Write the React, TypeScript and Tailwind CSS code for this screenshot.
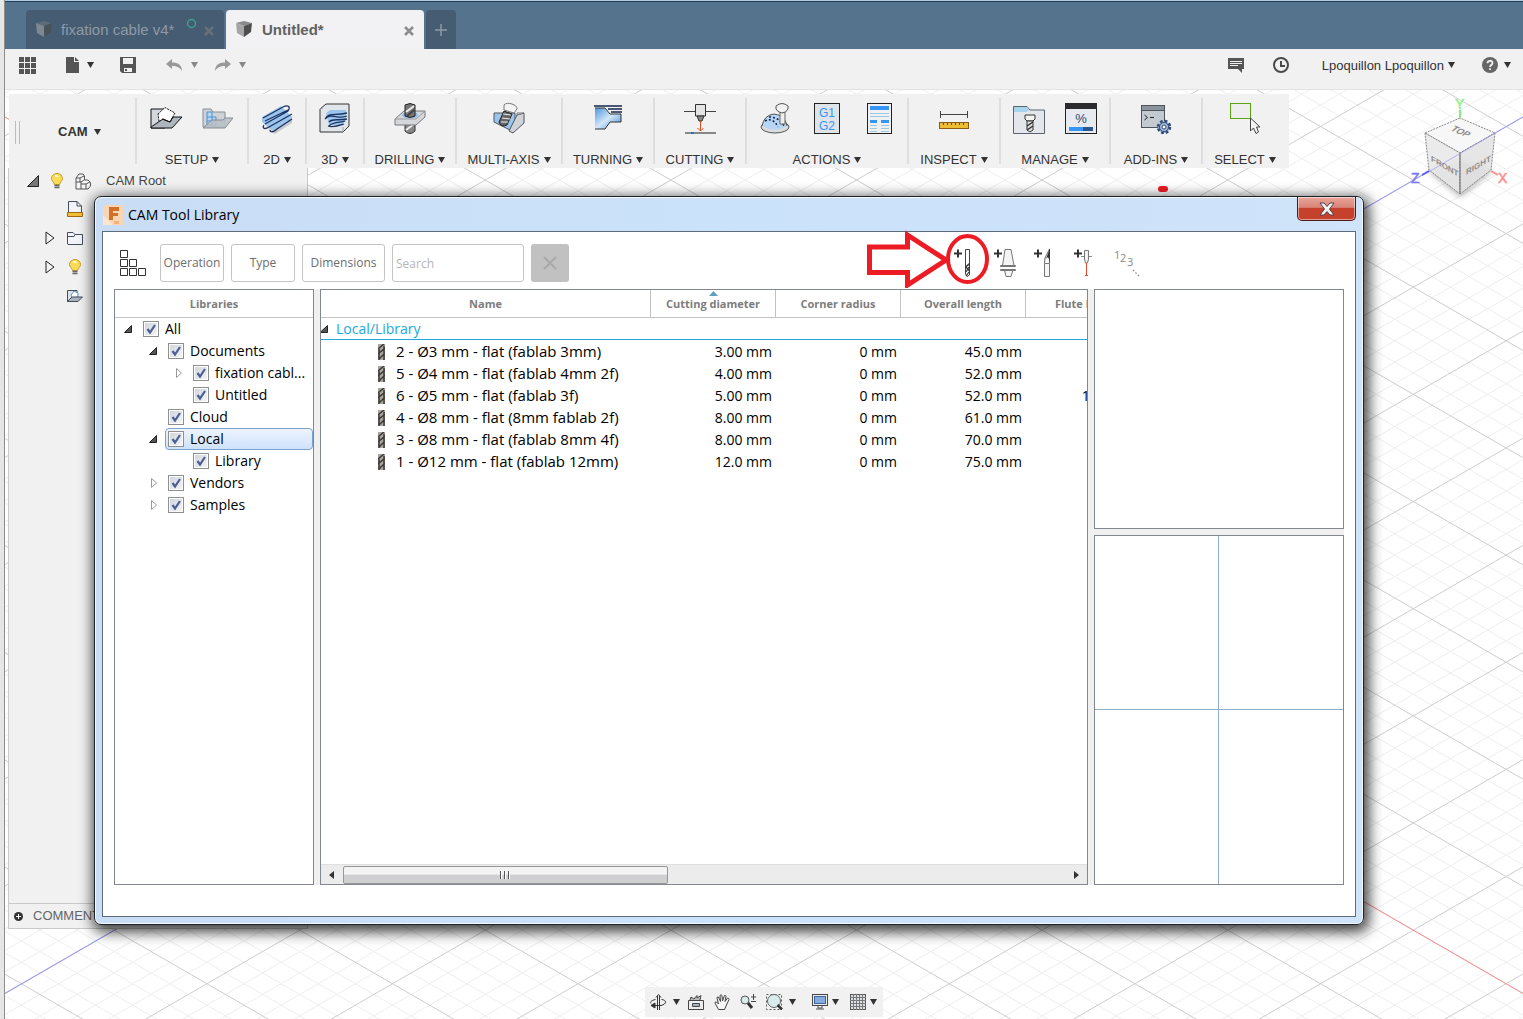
import type { ReactNode } from "react";
import clsx from "clsx";

function Caret({ className = "text-[#333]" }: { className?: string }) {
  return (
    <svg width="7" height="6" viewBox="0 0 7 6" className={clsx("shrink-0", className)} aria-hidden="true">
      <path d="M0 0H7L3.5 6Z" fill="currentColor" />
    </svg>
  );
}

/* ---------- ribbon icons, all on a 32 x 32 box ---------- */

function Icon32({ children }: { children: ReactNode }) {
  return (
    <svg width="32" height="32" viewBox="0 0 32 32" fill="none" className="shrink-0" aria-hidden="true">
      {children}
    </svg>
  );
}

const SetupIcon = () => (
  <Icon32>
    <path d="M1 7H15V26H1Z" fill="#d4d8dc" stroke="#111" />
    <path d="M8 12L15 5.500L25 11L20 20L9 19Z" fill="#fff" stroke="#111" strokeDasharray="2 1" />
    <path d="M1 25L13 17L20 20L23 15L32 15L22 26L1 26Z" fill="#aeb6bd" stroke="#111" />
    <path d="M12 17L20 20L23 15" stroke="#111" />
  </Icon32>
);

const SetupFolderIcon = () => (
  <Icon32>
    <path d="M1 7H9L11 10H23V25H1Z" fill="#cfd3d8" stroke="#878d94" />
    <path d="M5 10H10V15H14V23H5Z" fill="#b6d6f2" stroke="#4a90cc" />
    <path d="M5 15H10V24M5 19H14" stroke="#4a90cc" />
    <path d="M1 26L10 18H21L23 16H31L23 26Z" fill="#b9c0c7" fillOpacity=".85" stroke="#878d94" />
  </Icon32>
);

const Mill2DIcon = () => (
  <Icon32>
    <path d="M1 15L20 4L31 15V20L14 31L1 20Z" fill="#9cc5ee" />
    <path d="M14 28L31 16V21L14 32L6 26Z" fill="#c6cace" />
    <path
      d="M2 16L22 5C26 3 29 4 28 7L27 9L4 22M31 12L8 25C3 28 1 26 3 23M9 28C9 31 13 30 16 27L31 17M4 19L27 8"
      stroke="#1b3361"
      strokeWidth="1.300"
    />
  </Icon32>
);

const Mill3DIcon = () => (
  <Icon32>
    <path d="M1 7L7 2H30V24L24 30H1Z" fill="#e3e6e9" stroke="#333" />
    <path d="M7 11L11 8H27V19L22 23H10Z" fill="#9cc5ee" />
    <path d="M24 30V25M1 7L4 6" stroke="#9aa0a6" />
    <path
      d="M6 17C10 10 15 14 28 11M6 17C13 10 18 18 28 14M10 20C14 16 18 19 28 17M10 24C15 19 22 21 26 19M9 24C14 26 19 24 25 22"
      stroke="#1b3361"
      strokeWidth="1.300"
    />
  </Icon32>
);

const DrillIcon = () => (
  <Icon32>
    <path d="M11 22H21V29Q16 34 11 29Z" fill="#888" stroke="#333" />
    <path d="M12 28L20 22" stroke="#eee" strokeWidth="2" />
    <path d="M1 17L10 9H31V15L22 23H1Z" fill="#d4d8dc" stroke="#777" />
    <path d="M1 17H22L31 9" stroke="#999" />
    <ellipse cx="16" cy="13" rx="8" ry="3.500" fill="#8ebcec" />
    <path d="M11 3Q16 0 21 3V14Q16 17 11 14Z" fill="#777" stroke="#222" />
    <path d="M12 10L20 4" stroke="#eee" strokeWidth="2" />
    <path d="M13 14L20 8" stroke="#444" strokeWidth="2" />
  </Icon32>
);

const MultiAxisIcon = () => (
  <Icon32>
    <path d="M1 11H22V20L17 28L1 20Z" fill="#9cc5ee" stroke="#555" />
    <path d="M31 11L24 13L16 29L20 31L31 21Z" fill="#d0d4d8" stroke="#555" />
    <path d="M24 13L31 11H24Z" fill="#f2f2f2" stroke="#777" />
    <path d="M11 9L19 12L14 23Q8 26 6 20Z" fill="#666" stroke="#222" />
    <path d="M9 16L17 17M8 20L15 20M10 12L18 13" stroke="#eee" />
    <path d="M11 3C14 -1 25 3 24 7L21 11L11 8Z" fill="#f4f4f4" stroke="#777" />
  </Icon32>
);

const TurningIcon = () => (
  <Icon32>
    <defs>
      <linearGradient id="turn" x1="0" y1="0" x2="1" y2="1">
        <stop offset="0" stopColor="#4b96dd" />
        <stop offset=".5" stopColor="#d3e7f9" />
        <stop offset="1" stopColor="#3f8cd6" />
      </linearGradient>
    </defs>
    <path d="M3 6H13L18 12H29V20H18L13 27H3Z" fill="url(#turn)" />
    <path d="M3 6H13L18 12H29V20H18L13 27H3" stroke="#333" />
    <path d="M2 4H30M16 7H30M19 10H30" stroke="#15254d" strokeWidth="1.500" />
  </Icon32>
);

const CuttingIcon = () => (
  <Icon32>
    <path d="M0 9.500H32" stroke="#444" />
    <path d="M11.500 2.500H21.500V14H11.500Z" fill="#e4e4e4" stroke="#333" />
    <path d="M13 14H20L18 19H15Z" fill="#888" stroke="#333" />
    <path d="M16.500 19V29" stroke="#e2481f" />
    <path d="M13.500 26L16.500 29L19.500 26" stroke="#e2481f" />
    <path d="M1 31H32" stroke="#888" strokeWidth="2" />
    <path d="M7 31H10" stroke="#1c77c4" strokeWidth="2" />
  </Icon32>
);

const SimulateIcon = () => (
  <Icon32>
    <ellipse cx="16" cy="25" rx="14" ry="6" fill="#d9dcdf" stroke="#555" />
    <path d="M3 24Q5 13 15 12Q26 13 28 24Q16 31 3 24Z" fill="#b6d6f4" />
    <path d="M3 24Q5 13 15 12Q26 13 28 24" stroke="#555" />
    <path d="M6 19Q14 15 19 25M10 15Q20 15 25 24" stroke="#15254d" strokeWidth="1.500" strokeDasharray="2 2" />
    <path d="M21 9H26V22H21Z" fill="#eee" stroke="#666" />
    <path d="M17 4Q23 -1 29 4V7Q27 11 23 11Q18 10 17 7Z" fill="#f1f1f1" stroke="#555" />
  </Icon32>
);

const PostIcon = () => (
  <Icon32>
    <rect x="3.500" y="1.500" width="25" height="30" fill="#dfe4e9" stroke="#222" />
    <text x="16" y="15" textAnchor="middle" fontSize="12" fill="#3694f5" fontFamily="Liberation Sans, sans-serif">
      G1
    </text>
    <text x="16" y="28" textAnchor="middle" fontSize="12" fill="#3694f5" fontFamily="Liberation Sans, sans-serif">
      G2
    </text>
  </Icon32>
);

const SheetIcon = () => (
  <Icon32>
    <rect x="4.500" y="1.500" width="24" height="30" fill="#eef0f2" stroke="#222" />
    <path d="M7 6H26" stroke="#3694f5" strokeWidth="4" />
    <path d="M7 11.500H26M7 14.500H26M7 23.500H14M18 23.500H26M7 26.500H14M18 26.500H26M7 29.500H14M18 29.500H26" stroke="#9cc9df" />
    <path d="M7 19.500H14M18 19.500H26" stroke="#3694f5" strokeWidth="3" />
  </Icon32>
);

const MeasureIcon = () => (
  <Icon32>
    <path d="M2 12.500H30M2.500 9V16M29.500 9V16" stroke="#444" />
    <rect x="1.500" y="20.500" width="29" height="6" fill="#edbd35" stroke="#8b5a13" />
    <path d="M5.500 21V23M9.500 21V23M13.500 21V23M17.500 21V23M21.500 21V23M25.500 21V23" stroke="#6b4510" />
  </Icon32>
);

const ToolLibraryIcon = () => (
  <Icon32>
    <path d="M.5 8V4.500H14L17 8H31.500V31.500H.5Z" fill="#e3e7ec" stroke="#5b646e" />
    <path d="M1 5H14L16 8L14 10H1Z" fill="#a8d4ee" />
    <path d="M12 13H22V17L20 19H14L12 17Z" fill="#f4f4f4" stroke="#333" />
    <path d="M14 19H20V28L17 30L14 28Z" fill="#ddd" stroke="#333" />
    <path d="M14 24L20 20M14 28L20 24" stroke="#333" strokeWidth="1.500" />
  </Icon32>
);

const TaskManagerIcon = () => (
  <Icon32>
    <rect x=".5" y="1.500" width="31" height="30" fill="#e7ebef" stroke="#222" />
    <rect x="0" y="1" width="32" height="6" fill="#2b2b2d" />
    <text x="16" y="21" textAnchor="middle" fontSize="13" fill="#2a4a73" fontFamily="Liberation Sans, sans-serif">
      %
    </text>
    <path d="M4 27H18" stroke="#3694f5" strokeWidth="4" />
    <path d="M18 27H28" stroke="#27588f" strokeWidth="4" />
  </Icon32>
);

const AddInsIcon = () => (
  <Icon32>
    <rect x="1.500" y="3.500" width="23" height="22" fill="#c3cad1" stroke="#4c535b" />
    <path d="M2 6H24" stroke="#8b949c" strokeWidth="4" />
    <path d="M2 8.500H24" stroke="#4c535b" />
    <path d="M4.500 13L7.500 15.500L4.500 18M10 15.500H14" stroke="#222" />
    <circle cx="24" cy="25" r="6" fill="#a7bedd" stroke="#2e4876" strokeWidth="2.500" strokeDasharray="2.700 2" />
    <circle cx="24" cy="25" r="4.500" fill="#a7bedd" stroke="#2e4876" />
    <circle cx="24" cy="25" r="2" fill="#fff" stroke="#2e4876" />
  </Icon32>
);

const SelectIcon = () => (
  <Icon32>
    <rect x="1.500" y="1.500" width="20" height="15" fill="#eee" stroke="#57a515" />
    <path d="M21.500 16V29L24.500 26L27 31.500L29.500 30L27.500 25H31Z" fill="#f4f4f4" stroke="#444" />
  </Icon32>
);

const ribbon: { label: string; width: string; icons: (() => ReactNode)[] }[] = [
  { label: "SETUP", width: "w-[112px]", icons: [SetupIcon, SetupFolderIcon] },
  { label: "2D", width: "w-[58px]", icons: [Mill2DIcon] },
  { label: "3D", width: "w-[58px]", icons: [Mill3DIcon] },
  { label: "DRILLING", width: "w-[92px]", icons: [DrillIcon] },
  { label: "MULTI-AXIS", width: "w-[106px]", icons: [MultiAxisIcon] },
  { label: "TURNING", width: "w-[92px]", icons: [TurningIcon] },
  { label: "CUTTING", width: "w-[92px]", icons: [CuttingIcon] },
  { label: "ACTIONS", width: "w-[162px]", icons: [SimulateIcon, PostIcon, SheetIcon] },
  { label: "INSPECT", width: "w-[92px]", icons: [MeasureIcon] },
  { label: "MANAGE", width: "w-[110px]", icons: [ToolLibraryIcon, TaskManagerIcon] },
  { label: "ADD-INS", width: "w-[92px]", icons: [AddInsIcon] },
  { label: "SELECT", width: "w-[86px]", icons: [SelectIcon] },
];

/* ---------- title bar ---------- */

function CubeIcon({ dim }: { dim?: boolean }) {
  return (
    <svg width="16" height="16" viewBox="0 0 16 16" className={clsx("mb-1 shrink-0", dim && "opacity-60")} aria-hidden="true">
      <path d="M0 2L8 0L16 2L8 5Z" fill={dim ? "#6c7780" : "#8a8a8a"} />
      <path d="M0 2L8 5V16L1 12Z" fill="#a6a6a6" />
      <path d="M16 2L8 5V16L15 11Z" fill="#4d4d4d" />
    </svg>
  );
}

function CloseGlyph() {
  return (
    <svg width="10" height="10" viewBox="0 0 10 10" aria-hidden="true">
      <path d="M1 1L9 9M9 1L1 9" stroke="currentColor" strokeWidth="2.500" />
    </svg>
  );
}

function TitleBar() {
  return (
    <header className="flex h-[49px] items-end gap-0.5 border-t border-[#b4cade] bg-[#56738d] pl-[21px] shadow-[inset_0_1px_#1e3f5c]">
      <div className="flex h-[39px] w-[198px] items-center rounded-t bg-[#455c72] pt-0.5 pr-2.5 pl-2.5 text-[15px] text-[#8e9aa5]">
        <CubeIcon dim />
        <span className="ml-[9px]">fixation cable v4*</span>
        <svg width="11" height="11" viewBox="0 0 11 11" className="mb-3.5 ml-3" aria-hidden="true">
          <circle cx="5.500" cy="5.500" r="4" fill="none" stroke="#3aa08f" strokeWidth="1.500" />
        </svg>
        <button type="button" aria-label="Close fixation cable" className="ml-auto text-[#66717b]">
          <CloseGlyph />
        </button>
      </div>
      <div className="flex h-[39px] w-[198px] items-center rounded-t bg-[#f2f2f5] px-2.5 pt-0.5 text-[15px] font-bold text-[#626262]">
        <CubeIcon />
        <span className="ml-2.5">Untitled*</span>
        <button type="button" aria-label="Close Untitled" className="ml-auto text-[#8c8c8c]">
          <CloseGlyph />
        </button>
      </div>
      <button
        type="button"
        aria-label="New tab"
        className="flex h-[39px] w-[30px] items-center justify-center rounded-t bg-[#455c72] text-[#8e9aa5]"
      >
        <svg width="12" height="12" viewBox="0 0 12 12" aria-hidden="true">
          <path d="M6 0V12M0 6H12" stroke="currentColor" strokeWidth="1.500" />
        </svg>
      </button>
    </header>
  );
}

function QuickBar() {
  return (
    <div className="flex h-[41px] items-start border-b border-[#e2e2e2] bg-[#f1f1f1] pt-2 pr-3 pl-3.5 text-[13px] text-[#333] [&>button]:flex [&>button]:h-4 [&>button]:items-center">
      <button type="button" aria-label="Data panel">
        <svg width="17" height="17" viewBox="0 0 17 17" fill="#555" aria-hidden="true">
          <path d="M0 0h5v5h-5zM6 0h5v5h-5zM12 0h5v5h-5zM0 6h5v5h-5zM6 6h5v5h-5zM12 6h5v5h-5zM0 12h5v5h-5zM6 12h5v5h-5zM12 12h5v5h-5z" />
        </svg>
      </button>
      <button type="button" aria-label="File" className="ml-[30px] gap-2">
        <svg width="13" height="16" viewBox="0 0 13 16" fill="#555" aria-hidden="true">
          <path d="M0 0H8V5H13V16H0Z" />
          <path d="M9 0L13 4H9Z" />
        </svg>
        <Caret />
      </button>
      <button type="button" aria-label="Save" className="ml-[26px]">
        <svg width="16" height="16" viewBox="0 0 16 16" aria-hidden="true">
          <path d="M0 0H16V16H2L0 14Z" fill="#555" />
          <path d="M3 1H13V7H3Z" fill="#f1f1f1" />
          <path d="M4 11H12V15H4Z" fill="#f1f1f1" />
          <path d="M5 12H7V14H5Z" fill="#555" />
        </svg>
      </button>
      <button type="button" aria-label="Undo" className="ml-[30px] gap-2">
        <svg width="17" height="12" viewBox="0 0 17 12" aria-hidden="true">
          <path d="M0 5L6 0V3.500C12 3.500 16 6 16 12C14 8.500 11 7 6 7V10Z" fill="#999" />
        </svg>
        <Caret className="text-[#888]" />
      </button>
      <button type="button" aria-label="Redo" className="ml-4 gap-2">
        <svg width="17" height="12" viewBox="0 0 17 12" aria-hidden="true">
          <path d="M17 5L11 0V3.500C5 3.500 1 6 1 12C3 8.500 6 7 11 7V10Z" fill="#999" />
        </svg>
        <Caret className="text-[#888]" />
      </button>
      <button type="button" aria-label="Comments" className="ml-auto">
        <svg width="17" height="15" viewBox="0 0 17 15" aria-hidden="true">
          <path d="M0 0H16V11H14V15L10 11H0Z" fill="#555" />
          <path d="M2 3.500H14M2 5.500H14M2 7.500H10" stroke="#f1f1f1" />
        </svg>
      </button>
      <button type="button" aria-label="Job status" className="ml-7">
        <svg width="16" height="16" viewBox="0 0 16 16" fill="none" stroke="#4a4a4a" strokeWidth="2" aria-hidden="true">
          <circle cx="8" cy="8" r="7" />
          <path d="M8 4V9H12" />
        </svg>
      </button>
      <button type="button" className="ml-[33px] gap-1 whitespace-nowrap">
        <span className="pt-0.5">Lpoquillon Lpoquillon</span> <Caret />
      </button>
      <button type="button" aria-label="Help" className="ml-[27px] gap-1.5">
        <svg width="16" height="16" viewBox="0 0 16 16" aria-hidden="true">
          <circle cx="8" cy="8" r="8" fill="#666" />
          <path d="M5.500 6.200C5.500 3 10.500 3 10.500 6C10.500 8 8 8 8 10M8 11.200V13" fill="none" stroke="#f1f1f1" strokeWidth="1.800" />
        </svg>
        <Caret />
      </button>
    </div>
  );
}

function Ribbon() {
  return (
    <div className="ml-1 flex h-[74px] w-max shrink-0 bg-[#f1f1f1] text-[13px] text-[#333]">
      <div className="my-1 flex w-[128px] items-center border-r-2 border-[#dedede] pt-0.5 pl-1.5">
        <span className="h-[23px] w-[5px] border-x border-[#bdbdbd]" />
        <button type="button" className="ml-[38px] flex items-center gap-1.5 font-bold">
          CAM <Caret />
        </button>
      </div>
      {ribbon.map((g) => (
        <div
          key={g.label}
          className={clsx(
            g.width,
            "my-1 flex flex-col items-center justify-between border-r-2 border-[#dedede] pt-1 last:border-transparent",
          )}
        >
          <div className="flex gap-5">
            {g.icons.map((Icon, i) => (
              <button type="button" key={i} aria-label={`${g.label} ${i + 1}`}>
                <Icon />
              </button>
            ))}
          </div>
          <button type="button" className="flex h-2 items-center gap-1 whitespace-nowrap">
            {g.label} <Caret />
          </button>
        </div>
      ))}
    </div>
  );
}

/* ---------- browser tree ---------- */

const Bulb = () => (
  <svg width="12" height="16" viewBox="0 0 12 16" className="shrink-0" aria-hidden="true">
    <path d="M6 .5C2.500 .5 .5 3 .5 5.500C.5 8 3 9 3.500 11.500H8.500C9 9 11.500 8 11.500 5.500C11.500 3 9.500 .5 6 .5Z" fill="#fbdc57" stroke="#c39a2c" />
    <path d="M4 3Q6 2 7 4" stroke="#fff" strokeWidth="1.500" fill="none" />
    <path d="M3.500 12.500H8.500M3.500 14.500H8.500" stroke="#666" strokeWidth="1.500" />
  </svg>
);

const Closed = () => (
  <svg width="10" height="14" viewBox="0 0 10 14" className="shrink-0" aria-hidden="true">
    <path d="M1 1V13L9 7Z" fill="#f4f4f4" stroke="#222" />
  </svg>
);

function BrowserPanel() {
  return (
    <aside className="ml-[3px] flex w-[300px] flex-1 flex-col border-x border-b border-[#c9c9c9] bg-[#f1f1f1] text-[13px] text-[#444]">
      <div className="flex h-[26px] items-center pl-[18px]">
        <svg width="12" height="12" viewBox="0 0 12 12" aria-hidden="true">
          <path d="M11.500 .5V11.500H.5Z" fill="#777" stroke="#222" />
        </svg>
        <span className="ml-3">
          <Bulb />
        </span>
        <svg width="17" height="17" viewBox="0 0 17 17" fill="#f4f4f4" stroke="#555" className="ml-3" aria-hidden="true">
          <path d="M1 5L4 1H8L9.500 3V7H13L15.500 9.500V13L13 16H1Z" />
          <path d="M1 5L5 5L9 3M5 5V9M1 9H6L9 7M6 9V16M6 11H11L15 9M11 11V16" fill="none" />
        </svg>
        <span className="ml-3.5">CAM Root</span>
      </div>
      <div className="flex h-[29px] items-center pl-[58px]">
        <svg width="16" height="16" viewBox="0 0 16 16" aria-hidden="true">
          <path d="M1.500 .5H10L14.500 5V12H1.500Z" fill="#f2f4f7" stroke="#444d5c" />
          <path d="M10 .5V5H14.500" fill="none" stroke="#444d5c" />
          <path d="M.5 11.500H15.500V15.500H.5Z" fill="#f2c037" stroke="#9c6a14" />
        </svg>
      </div>
      <div className="flex h-[29px] items-center pl-9">
        <Closed />
        <svg width="16" height="14" viewBox="0 0 16 14" className="ml-3" aria-hidden="true">
          <path d="M.5 13V1.500H6L8 3.500H15.500V13.500H1Z" fill="#f2f4f7" stroke="#444d5c" />
          <path d="M1 5.500H7L8 3.500" fill="none" stroke="#444d5c" />
        </svg>
      </div>
      <div className="flex h-[29px] items-center pl-9">
        <Closed />
        <span className="ml-3.5">
          <Bulb />
        </span>
      </div>
      <div className="flex h-[29px] items-center pl-[58px]">
        <svg width="16" height="12" viewBox="0 0 16 12" aria-hidden="true">
          <path d="M.5 .5H10V11.500H.5Z" fill="#dfe3e8" stroke="#444d5c" />
          <path d="M4 5L7 1L11 3V7L5 8Z" fill="#fff" stroke="#5b93c4" />
          <path d="M.5 11.500L5 7H15.500L11 11.500Z" fill="#a9b4bf" stroke="#444d5c" />
        </svg>
      </div>
      <div className="mt-auto flex h-[25px] items-center gap-2.5 border-t border-[#c9c9c9] pl-[5px] text-[#666]">
        <svg width="9" height="9" viewBox="0 0 9 9" aria-hidden="true">
          <circle cx="4.500" cy="4.500" r="4.500" fill="#333" />
          <path d="M4.500 2V7M2 4.500H7" stroke="#fff" />
        </svg>
        COMMENTS
      </div>
    </aside>
  );
}

/* ---------- canvas ---------- */

const MAJOR = 185.6;
const MINOR = MAJOR / 5;
const SLOPE = 0.57735;
const REACH = 4000;

// both line families pass through (109.1, -17.1), one line every MINOR pixels
function isoLines(major: boolean) {
  let d = "";
  for (let k = -60; k <= 110; k++) {
    if ((k % 5 === 0) !== major) continue;
    const x = 109.1 + k * MINOR;
    d += `M${x} -17.1l${REACH} ${REACH * SLOPE}M${x} -17.1l${-REACH} ${REACH * SLOPE}`;
  }
  return d;
}

function CanvasGrid() {
  return (
    <svg className="absolute inset-0 size-full" fill="none" aria-hidden="true">
      <path d={isoLines(false)} stroke="#eeeeee" />
      <path d={isoLines(true)} stroke="#cdcdcd" />
      <path d="M0 27L1518 903.500" stroke="#ff9090" />
      <path d="M0 903.500L1518 27" stroke="#9494ff" />
    </svg>
  );
}

function ViewCube() {
  return (
    <svg
      width="120"
      height="120"
      viewBox="0 0 120 120"
      className="absolute top-0 right-0"
      fontFamily="Liberation Sans, sans-serif"
      fontWeight="bold"
      aria-label="View cube"
    >
      <defs>
        <filter id="cubeShadow" x="-30%" y="-30%" width="160%" height="160%">
          <feGaussianBlur stdDeviation="3" />
        </filter>
      </defs>
      <path d="M25 80L57 107L90 80L57 70Z" fill="#000" fillOpacity=".3" filter="url(#cubeShadow)" />
      <g fillOpacity=".9" stroke="#888" strokeDasharray="2 1">
        <path d="M57 28L22 43L57 63L92 43Z" fill="#f6f6f6" />
        <path d="M22 43L57 63V104L26 80Z" fill="#e9e9e9" />
        <path d="M92 43L57 63V104L88 80Z" fill="#e3e3e3" />
      </g>
      <path d="M57 63V104" stroke="#777" />
      <path d="M24 83L92 43" stroke="#9494ff" strokeOpacity=".6" />
      <g fill="#8d8d8d">
        <text transform="translate(47 40) rotate(24) skewX(-25)" fontSize="9">TOP</text>
        <text transform="translate(28 71) skewY(30)" fontSize="8">FRONT</text>
        <text transform="translate(63 85) skewY(-30)" fontSize="8">RIGHT</text>
      </g>
      <path d="M57 20V28" stroke="#7df07d" strokeWidth="2" />
      <path d="M19 85L26 81" stroke="#5b5bff" strokeWidth="2" />
      <path d="M88 81L95 85" stroke="#ff8d8d" strokeWidth="2" />
      <g fontSize="14" fontWeight="normal" strokeWidth=".5">
        <text x="52" y="19" fill="#90f090" stroke="#90f090">Y</text>
        <text x="8" y="93" fill="#7878f8" stroke="#7878f8">Z</text>
        <text x="95" y="93" fill="#ff8d8d" stroke="#ff8d8d">X</text>
      </g>
    </svg>
  );
}

function NavBar() {
  return (
    <nav className="relative mx-auto mt-[58px] mb-0.5 flex h-[30px] w-max items-center bg-[#f1f1f1] pr-1.5 pl-[5px] [&>button]:flex [&>button]:items-center">
      <button type="button" aria-label="Orbit" className="gap-1.5">
        <svg width="17" height="16" viewBox="0 0 17 16" fill="none" stroke="#333" aria-hidden="true">
          <path d="M7.500 16V2M9.500 16V2M6 3.500L8.500 .5L11 3.500" />
          <path d="M11.500 5.500C17 6 17 10 11 11.500H3M5.500 5.500C1 6.500 0 8 1 9.500" />
          <path d="M5 9L1 11.500L5 14Z" fill="#333" />
        </svg>
        <Caret />
      </button>
      <button type="button" aria-label="Look at" className="ml-2">
        <svg width="16" height="16" viewBox="0 0 16 16" fill="none" stroke="#444" aria-hidden="true">
          <path d="M.5 6.500H15.500V15.500H.5Z" fill="#eee" />
          <path d="M2 6L3 3L6 5L9 1.500V4L13 1.500L12 6" fill="#bbb" />
          <path d="M4.500 9.500H11.500V12.500H4.500Z" fill="#a8b3bd" />
        </svg>
      </button>
      <button type="button" aria-label="Pan" className="ml-2.5">
        <svg width="16" height="16" viewBox="0 0 16 16" aria-hidden="true">
          <path
            d="M4.500 15.500L1 9Q1 7.500 2.500 8L4.500 10L3 4Q3 2.500 4.500 3L6.500 7.500L6 1.500Q7 0 8 1.500L8.500 7L10.500 1.500Q12 1 12 2.500L11 7.500L13.500 4Q15 4 15 5.500L12.500 11L10.500 15.500Z"
            fill="#f7f7f7"
            stroke="#444"
          />
        </svg>
      </button>
      <button type="button" aria-label="Zoom" className="ml-2.5">
        <svg width="16" height="16" viewBox="0 0 16 16" aria-hidden="true">
          <circle cx="5" cy="6" r="4" fill="#d9ecec" stroke="#555" />
          <path d="M8 9L12 14" stroke="#333" strokeWidth="3" />
          <path d="M13.500 0V6M11 3H16M11 7.500H16" stroke="#444" />
        </svg>
      </button>
      <button type="button" aria-label="Fit" className="ml-2.5 gap-1.5">
        <svg width="17" height="16" viewBox="0 0 17 16" aria-hidden="true">
          <rect x=".5" y=".5" width="15" height="15" fill="none" stroke="#555" strokeDasharray="2 2" />
          <circle cx="8" cy="7" r="6.500" fill="#d9ecec" stroke="#666" />
          <path d="M11.500 11L16 15.500" stroke="#333" strokeWidth="2.500" />
        </svg>
        <Caret />
      </button>
      <button type="button" aria-label="Display settings" className="ml-4 gap-1">
        <svg width="16" height="16" viewBox="0 0 16 16" aria-hidden="true">
          <rect x=".5" y=".5" width="15" height="11" fill="#eee" stroke="#444" />
          <rect x="2.500" y="2.500" width="11" height="7" fill="#84ace0" stroke="#41669a" />
          <path d="M6 12V14H10V12M4 15H12" fill="none" stroke="#555" />
        </svg>
        <Caret />
      </button>
      <button type="button" aria-label="Grid and snaps" className="ml-[11px] gap-1">
        <svg width="16" height="16" viewBox="0 0 16 16" fill="none" aria-hidden="true">
          <rect x=".5" y=".5" width="15" height="15" fill="#dadfe5" stroke="#555" />
          <path d="M3.500 0V16M6.500 0V16M9.500 0V16M12.500 0V16M0 3.500H16M0 6.500H16M0 9.500H16M0 12.500H16" stroke="#777" />
        </svg>
        <Caret />
      </button>
    </nav>
  );
}

/* ---------- tool library dialog ---------- */

type Node = { name: string; level: number; state?: "open" | "closed"; selected?: boolean };

const libraries: Node[] = [
  { name: "All", level: 0, state: "open" },
  { name: "Documents", level: 1, state: "open" },
  { name: "fixation cabl...", level: 2, state: "closed" },
  { name: "Untitled", level: 2 },
  { name: "Cloud", level: 1 },
  { name: "Local", level: 1, state: "open", selected: true },
  { name: "Library", level: 2 },
  { name: "Vendors", level: 1, state: "closed" },
  { name: "Samples", level: 1, state: "closed" },
];

const indents = ["pl-2", "pl-[33px]", "pl-[58px]"];

function TreeArrow({ state }: { state?: "open" | "closed" }) {
  return (
    <svg width="10" height="10" viewBox="0 0 10 10" className="shrink-0" aria-hidden="true">
      {state === "open" && <path d="M8.500 1.500V8.500H1.500Z" fill="#555" stroke="#222" />}
      {state === "closed" && <path d="M3.500 .5V9.500L8.500 5Z" fill="#fff" stroke="#999" />}
    </svg>
  );
}

function LibraryTree() {
  return (
    <div className="w-[200px] shrink-0 overflow-hidden border border-[#828790] bg-white">
      <div className="flex h-7 items-center justify-center border-b border-[#c3c3c3] text-[11px] font-bold text-[#7d7d7d]">
        Libraries
      </div>
      <ul>
        {libraries.map((n) => (
          <li key={n.name} className={clsx("flex h-[22px] items-center", indents[n.level])}>
            <TreeArrow state={n.state} />
            <label
              className={clsx(
                "ml-[7px] flex h-[22px] flex-1 items-center rounded-sm border pl-0.5 whitespace-nowrap",
                n.selected ? "border-[#7da2ce] bg-linear-to-b from-[#edf4fe] to-[#cee2fc]" : "border-transparent",
              )}
            >
              <span className="relative flex size-4">
                <input
                  type="checkbox"
                  defaultChecked
                  className="peer size-4 appearance-none border border-[#8e8f8f] bg-linear-to-br from-[#cfd4da] to-[#f6f6f6] ring-1 ring-white ring-inset"
                />
                <svg
                  viewBox="0 0 16 16"
                  className="pointer-events-none absolute inset-0 hidden size-4 peer-checked:block"
                  aria-hidden="true"
                >
                  <path d="M4.500 8L7 11.500L12 4" fill="none" stroke="#4a5f97" strokeWidth="2.200" />
                </svg>
              </span>
              <span className="ml-1.5">{n.name}</span>
            </label>
          </li>
        ))}
      </ul>
    </div>
  );
}

const tools = [
  ["2 - Ø3 mm - flat (fablab 3mm)", "3.00 mm", "0 mm", "45.0 mm", ""],
  ["5 - Ø4 mm - flat (fablab 4mm 2f)", "4.00 mm", "0 mm", "52.0 mm", ""],
  ["6 - Ø5 mm - flat (fablab 3f)", "5.00 mm", "0 mm", "52.0 mm", "13.00 mm"],
  ["4 - Ø8 mm - flat (8mm fablab 2f)", "8.00 mm", "0 mm", "61.0 mm", ""],
  ["3 - Ø8 mm - flat (fablab 8mm 4f)", "8.00 mm", "0 mm", "70.0 mm", ""],
  ["1 - Ø12 mm - flat (fablab 12mm)", "12.0 mm", "0 mm", "75.0 mm", ""],
];

const columns = ["Name", "Cutting diameter", "Corner radius", "Overall length", "Flute length"];

function ToolTable() {
  return (
    <div className="flex min-w-0 flex-1 flex-col overflow-hidden border border-[#828790] bg-white">
      <div className="flex-1 overflow-hidden">
        <table className="w-[830px] table-fixed border-separate border-spacing-0">
          <colgroup>
            <col className="w-[330px]" />
            <col className="w-[125px]" />
            <col className="w-[125px]" />
            <col className="w-[125px]" />
            <col className="w-[125px]" />
          </colgroup>
          <thead>
            <tr className="h-7">
              {columns.map((c) => (
                <th
                  key={c}
                  className="relative border-r border-b border-[#c3c3c3] p-0 text-[11px] font-bold whitespace-nowrap text-[#7d7d7d]"
                >
                  {c === "Cutting diameter" && (
                    <svg width="9" height="5" viewBox="0 0 9 5" className="absolute top-px left-1/2 -ml-1" aria-hidden="true">
                      <path d="M0 5L4.500 0L9 5Z" fill="#5f9fbe" />
                    </svg>
                  )}
                  {c}
                </th>
              ))}
            </tr>
          </thead>
          <tbody>
            <tr className="h-[23px] align-top">
              <td colSpan={5} className="p-0 text-[#1ba8dc]">
                <span className="flex h-[22px] items-center gap-1.5 border-b border-[#1ba8dc]">
                  <svg width="9" height="10" viewBox="0 0 9 10" aria-hidden="true">
                    <path d="M6.500 1.500V8.500H-1Z" fill="#555" stroke="#222" />
                  </svg>
                  Local/Library
                </span>
              </td>
            </tr>
            {tools.map(([name, ...values]) => (
              <tr key={name} className="h-[22px]">
                <td className="p-0 pl-[57px]">
                  <span className="flex h-[22px] items-center gap-[11px] text-[15px] whitespace-nowrap">
                    <svg width="7" height="16" viewBox="0 0 7 16" className="shrink-0" aria-hidden="true">
                      <rect width="7" height="16" fill="#a9a69f" />
                      <path d="M0 5L6 0M0 10L7 4M1 15L7 9M1 5V16M6 2V16" stroke="#3b3a38" strokeWidth="1.500" />
                    </svg>
                    {name}
                  </span>
                </td>
                {values.map((v, i) => (
                  <td key={i} className="p-0 pr-1 text-right whitespace-nowrap">
                    {v}
                  </td>
                ))}
              </tr>
            ))}
          </tbody>
        </table>
      </div>
      <div className="flex h-5 items-center border-t border-[#e0e0e0] bg-[#ececec]">
        <button type="button" aria-label="Scroll left" className="flex w-[22px] justify-center">
          <svg width="6" height="8" viewBox="0 0 6 8" aria-hidden="true">
            <path d="M5 0V8L0 4Z" fill="#333" />
          </svg>
        </button>
        <div className="flex-1">
          <div className="flex h-[18px] w-[45%] items-center justify-center gap-0.5 rounded-xs border border-[#979797] bg-linear-to-b from-[#f3f3f3] from-45% to-[#cfcfd1] to-50%">
            <span className="h-2 w-0.5 border-l border-[#555] bg-white" />
            <span className="h-2 w-0.5 border-l border-[#555] bg-white" />
            <span className="h-2 w-0.5 border-l border-[#555] bg-white" />
          </div>
        </div>
        <button type="button" aria-label="Scroll right" className="flex w-[22px] justify-center">
          <svg width="6" height="8" viewBox="0 0 6 8" aria-hidden="true">
            <path d="M1 0V8L6 4Z" fill="#333" />
          </svg>
        </button>
      </div>
    </div>
  );
}

const Plus = () => <path d="M1 5.500H9M5 1.500V9.500" stroke="#333" strokeWidth="2" />;

function NewToolButton({ label, children }: { label: string; children: ReactNode }) {
  return (
    <button type="button" aria-label={label} className="w-10">
      <svg width="32" height="30" viewBox="0 0 32 30" fill="none" aria-hidden="true">
        {children}
      </svg>
    </button>
  );
}

function DialogToolbar() {
  const filter = "h-[38px] rounded-[3px] border border-[#c4c4c4] text-xs text-[#6d6d6d]";
  return (
    <div className="flex h-[38px] items-center gap-[7px] pl-[5px]">
      <svg width="27" height="27" viewBox="0 0 27 27" fill="none" stroke="#333" className="mr-[7px] shrink-0" aria-hidden="true">
        <path d="M1.500 .5h7v7h-7zM1.500 9.500h7v7h-7zM10.500 9.500h7v7h-7zM1.500 18.500h7v7h-7zM10.500 18.500h7v7h-7zM19.500 18.500h7v7h-7z" />
      </svg>
      <button type="button" className={clsx(filter, "w-16")}>
        Operation
      </button>
      <button type="button" className={clsx(filter, "w-16")}>
        Type
      </button>
      <button type="button" className={clsx(filter, "w-[83px]")}>
        Dimensions
      </button>
      <input
        type="search"
        aria-label="Search"
        placeholder="Search"
        className={clsx(filter, "w-[132px] px-[3px] placeholder:text-[#b5b5b5]")}
      />
      <button type="button" aria-label="Clear" className="flex size-[38px] items-center justify-center rounded-[3px] bg-[#c1c1c1]">
        <svg width="14" height="14" viewBox="0 0 14 14" aria-hidden="true">
          <path d="M1 1L13 13M13 1L1 13" stroke="#a9a9a9" strokeWidth="2" />
        </svg>
      </button>
      <div className="relative mr-[191px] ml-auto flex">
        <NewToolButton label="New mill tool">
          <Plus />
          <path d="M12.500 1.500H16.500V15L12.500 19Z" fill="#fff" stroke="#444" />
          <path d="M12.500 15V26L14 28.500L16.500 27V15" stroke="#444" />
          <path d="M12.500 19L16.500 16M13 24L16 19M13 19L16.500 23M13 28L16 24" stroke="#333" strokeWidth="1.200" />
        </NewToolButton>
        <NewToolButton label="New holder">
          <Plus />
          <path d="M12 1.500H18L21 17.500H9.500ZM11.500 22H20L18 28.500H13Z" fill="#f4f4f4" stroke="#777" />
          <path d="M7.500 17.500H22.500V18.500H7.500ZM7.500 21.500H22.500V22.500H7.500Z" fill="#ccc" stroke="#777" />
        </NewToolButton>
        <NewToolButton label="New turning tool">
          <Plus />
          <path d="M11.500 15.500H16.500V28.500H11.500Z" fill="#f6f6f6" stroke="#777" />
          <path d="M11.500 15L12 10L16.500 1V15" fill="#fff" stroke="#666" />
          <path d="M17 0V14L15 9L13 11Z" fill="#333" />
        </NewToolButton>
        <NewToolButton label="New cutting tool">
          <Plus />
          <path d="M8 8.500H19" stroke="#888" />
          <path d="M11.500 2.500H15.500V11L14.500 15H12.500L11.500 11Z" fill="#f2f2f2" stroke="#777" />
          <path d="M13.500 15V28M12 27.500H15" stroke="#df4b2c" />
        </NewToolButton>
        <NewToolButton label="Renumber tools">
          <g fill="#888" fontSize="11" fontFamily="Open Sans, sans-serif">
            <text x="1" y="11">1</text>
            <text x="7" y="14">2</text>
            <text x="14" y="18">3</text>
          </g>
          <path d="M20 22L26 28" stroke="#888" strokeWidth="1.200" strokeDasharray="1.500 2" />
        </NewToolButton>
        {/* hand-drawn callout pointing at the mill tool */}
        <svg width="124" height="58" viewBox="0 0 124 58" className="pointer-events-none absolute -top-[18px] -left-[87px]" aria-hidden="true">
          <g fill="none" stroke="#ed1c24" strokeWidth="4">
            <path d="M3.500 17H41.500V5L80 30L41.500 55V42.500H3.500Z" strokeWidth="5" />
            <ellipse cx="101.500" cy="29" rx="19.500" ry="23" />
          </g>
        </svg>
      </div>
    </div>
  );
}

function ToolLibraryDialog() {
  return (
    <section
      role="dialog"
      aria-label="CAM Tool Library"
      className="absolute top-[196px] right-[159px] bottom-[94px] left-[94px] flex flex-col rounded-[7px] border border-[#1c232b] bg-linear-to-r from-[#c9ddf5] via-[#cbe2fb] to-[#cfe3f9] px-[7px] pb-[7px] font-['Open_Sans','Noto_Sans',sans-serif] text-sm text-black shadow-[2px_4px_14px_3px_rgba(0,0,0,0.75)] ring-1 ring-white/80 ring-inset"
    >
      <div className="flex h-[34px] shrink-0 items-center pt-0.5 pl-px">
        <svg width="20" height="20" viewBox="0 0 20 20" aria-hidden="true">
          <rect width="20" height="20" fill="#f9d5b4" />
          <path d="M0 10L10 20H0Z" fill="#fbe6d2" />
          <path d="M6 2H16V6H10V8H15V11H10V15H6Z" fill="#cf7227" />
          <path d="M11 16H16V19H11Z" fill="#f0b27c" />
        </svg>
        <h1 className="ml-[5px]">CAM Tool Library</h1>
        <button
          type="button"
          aria-label="Close"
          className="-mt-0.5 ml-auto flex h-6 w-[59px] items-center justify-center self-start rounded-b-[5px] border border-t-0 border-[#4d1a1a] bg-linear-to-b from-[#eaa79c] from-0% via-[#d98378] via-45% to-[#c5412b] to-50% ring-1 ring-white/50 ring-inset"
        >
          <svg width="16" height="14" viewBox="0 0 16 14" aria-hidden="true">
            <path d="M1 1H5L8 4.500L11 1H15L10.500 7L15 13H11L8 9.500L5 13H1L5.500 7Z" fill="#f4f4f4" stroke="#51404d" />
          </svg>
        </button>
      </div>
      <div className="flex min-h-0 flex-1 flex-col border border-[#5d6b7a] bg-white pt-3 pr-[11px] pb-[31px] pl-[11px]">
        <DialogToolbar />
        <div className="mt-[7px] flex min-h-0 flex-1 gap-1.5 bg-[#f0f0f0]">
          <LibraryTree />
          <ToolTable />
          <div className="flex w-[250px] shrink-0 flex-col gap-1.5">
            <div className="h-60 border border-[#828790] bg-white" />
            <div className="grid flex-1 grid-cols-2 grid-rows-2 border border-[#828790] bg-white">
              <div className="border-r border-b border-[#8fafca]" />
              <div className="border-b border-[#8fafca]" />
              <div className="border-r border-[#8fafca]" />
              <div />
            </div>
          </div>
        </div>
      </div>
    </section>
  );
}

export default function App() {
  return (
    <div className="relative flex h-screen min-h-[700px] flex-col overflow-hidden border-l-4 border-[#e6e6e6] bg-white font-['Liberation_Sans',Arial,sans-serif]">
      <div className="flex flex-1 flex-col border-l border-[#8d8d8d]">
        <TitleBar />
        <QuickBar />
        <main className="relative flex flex-1 flex-col pt-1">
          <CanvasGrid />
          <ViewCube />
          <div className="relative flex flex-1 flex-col">
            <Ribbon />
            <BrowserPanel />
          </div>
          <NavBar />
          <span className="absolute top-24 right-[355px] h-1.5 w-2.5 rounded-full bg-[#ed1c24]" />
        </main>
      </div>
      <div className="absolute inset-y-0 right-0 -left-1">
        <ToolLibraryDialog />
      </div>
    </div>
  );
}
